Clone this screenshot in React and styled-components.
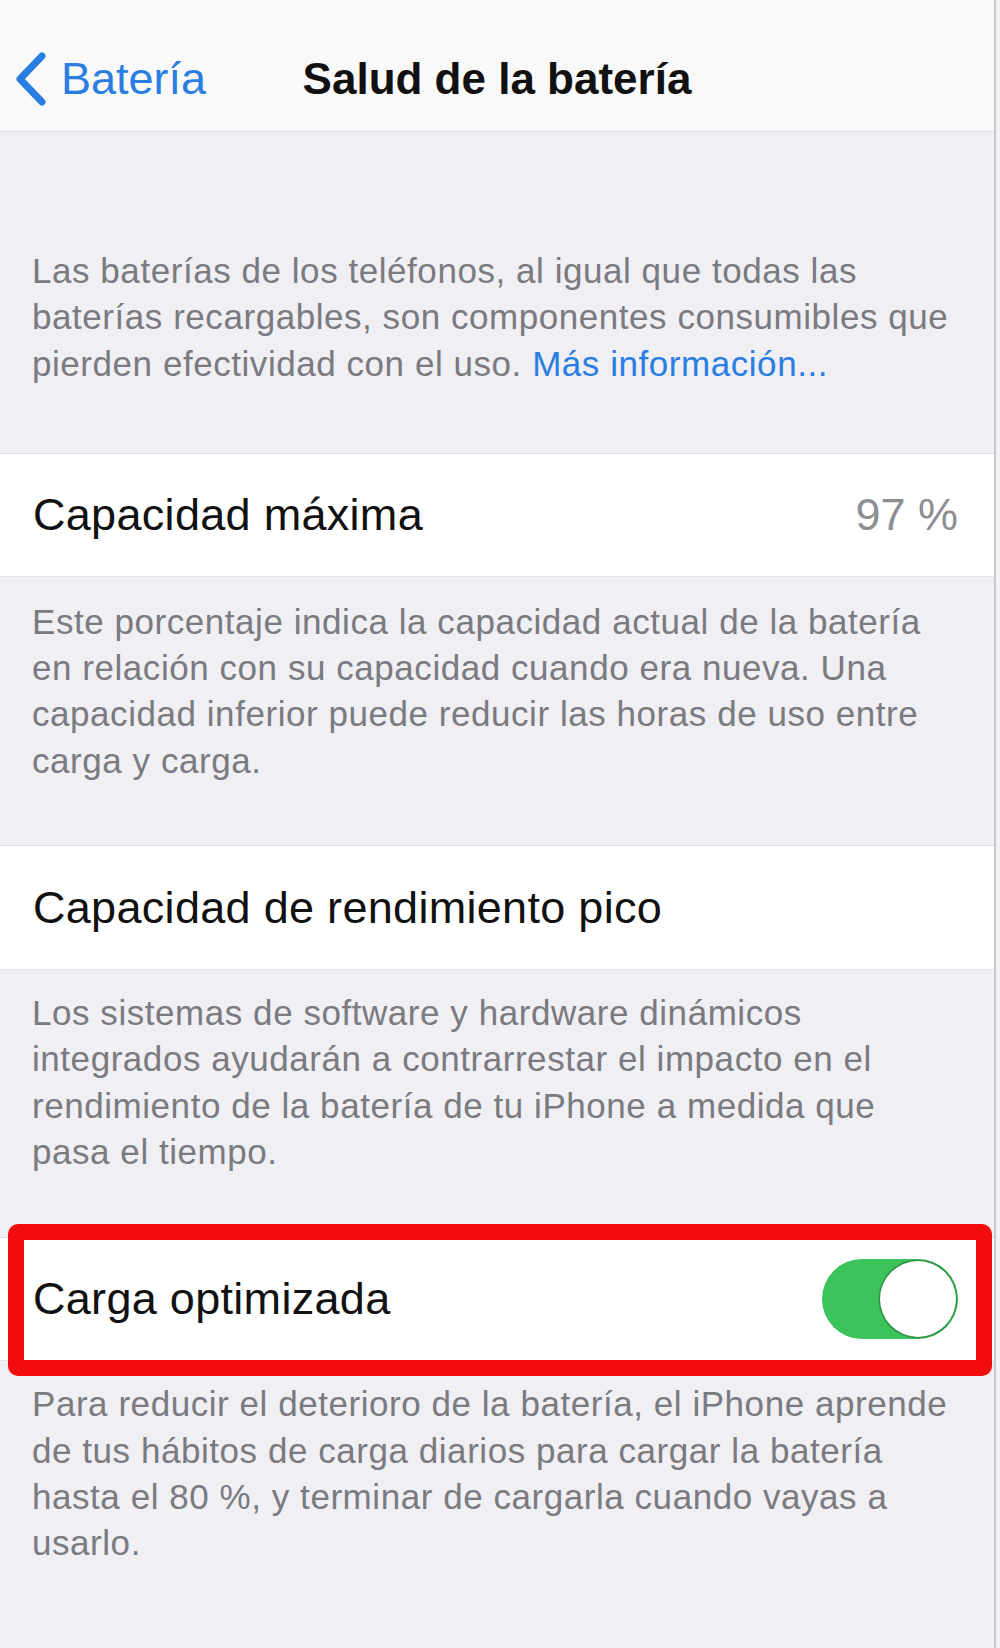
import React from "react";
import styled, { createGlobalStyle } from "styled-components";

const GlobalStyle = createGlobalStyle`
  body {
    margin: 0;
    background: #efeff4;
    font-family: "Liberation Sans", Arial, sans-serif;
    -webkit-font-smoothing: antialiased;
  }
`;

const Screen = styled.div`
  display: flex;
  min-height: 1648px;
  background: #efeff4;
`;

const Column = styled.div`
  flex: 1;
  display: flex;
  flex-direction: column;
`;

const Edge = styled.div`
  width: 6px;
  background: #f3f3f6;
  border-left: 2px solid #c8c8cd;
  box-sizing: border-box;
`;

const NavBar = styled.header`
  height: 132px;
  box-sizing: border-box;
  padding-top: 26px;
  background: #f9f9f9;
  border-bottom: 1px solid #dcdce0;
  display: grid;
  grid-template-columns: 1fr auto 1fr;
  align-items: center;
`;

const BackButton = styled.div`
  display: flex;
  align-items: center;
  gap: 14px;
  padding-left: 15px;
  color: #2a7de1;
  font-size: 45px;
`;

const Title = styled.h1`
  margin: 0;
  font-size: 44px;
  font-weight: 700;
  color: #111;
`;

const Footer = styled.p`
  margin: 0;
  padding: ${(p) => p.$top}px 12px ${(p) => p.$bottom}px 32px;
  font-size: 35px;
  letter-spacing: 0.55px;
  line-height: 46.3px;
  color: #7a7a7f;
  white-space: pre-line;
`;

const Link = styled.span`
  color: #2a7de1;
`;

const Row = styled.div`
  position: relative;
  height: ${(p) => p.$height || 124}px;
  box-sizing: border-box;
  padding: 0 36px 0 33px;
  background: #fff;
  border-top: 1px solid #e2e2e6;
  border-bottom: 1px solid #e2e2e6;
  display: flex;
  align-items: center;
  justify-content: space-between;

  ${(p) =>
    p.$marked &&
    `
    &::after {
      content: "";
      position: absolute;
      top: -14px;
      bottom: -16px;
      left: 8px;
      right: 2px;
      border: 16px solid #f20c0c;
      border-radius: 10px;
    }
  `}
`;

const Label = styled.span`
  font-size: 45px;
  letter-spacing: 0.3px;
  color: #111;
`;

const Value = styled.span`
  font-size: 45px;
  color: #8e8e93;
`;

const Toggle = styled.div`
  width: 136px;
  height: 80px;
  box-sizing: border-box;
  padding: 2px;
  border-radius: 40px;
  background: #3cc35b;
  display: flex;
  justify-content: ${(p) => (p.$on ? "flex-end" : "flex-start")};
`;

const Knob = styled.div`
  width: 76px;
  height: 76px;
  border-radius: 50%;
  background: #fff;
  box-shadow: 0 0 0 1.5px rgba(30, 100, 45, 0.5);
`;

const Chevron = () => (
  <svg width="32" height="54" viewBox="0 0 32 54">
    <polyline
      points="27,4 5,27 27,50"
      fill="none"
      stroke="#2a7de1"
      strokeWidth="7"
      strokeLinecap="round"
      strokeLinejoin="round"
    />
  </svg>
);

export default function App() {
  return (
    <>
      <GlobalStyle />
      <Screen>
        <Column>
          <NavBar>
            <BackButton>
              <Chevron />
              Batería
            </BackButton>
            <Title>Salud de la batería</Title>
            <div />
          </NavBar>

          <Footer $top={116} $bottom={66}>
            {"Las baterías de los teléfonos, al igual que todas las\nbaterías recargables, son componentes consumibles que\npierden efectividad con el uso. "}
            <Link>Más información...</Link>
          </Footer>

          <Row>
            <Label>Capacidad máxima</Label>
            <Value>97 %</Value>
          </Row>

          <Footer $top={22} $bottom={61}>
            {"Este porcentaje indica la capacidad actual de la batería\nen relación con su capacidad cuando era nueva. Una\ncapacidad inferior puede reducir las horas de uso entre\ncarga y carga."}
          </Footer>

          <Row $height={125}>
            <Label>Capacidad de rendimiento pico</Label>
          </Row>

          <Footer $top={20} $bottom={62}>
            {"Los sistemas de software y hardware dinámicos\nintegrados ayudarán a contrarrestar el impacto en el\nrendimiento de la batería de tu iPhone a medida que\npasa el tiempo."}
          </Footer>

          <Row $marked>
            <Label>Carga optimizada</Label>
            <Toggle $on>
              <Knob />
            </Toggle>
          </Row>

          <Footer $top={20} $bottom={40}>
            {"Para reducir el deterioro de la batería, el iPhone aprende\nde tus hábitos de carga diarios para cargar la batería\nhasta el 80 %, y terminar de cargarla cuando vayas a\nusarlo."}
          </Footer>
        </Column>
        <Edge />
      </Screen>
    </>
  );
}
